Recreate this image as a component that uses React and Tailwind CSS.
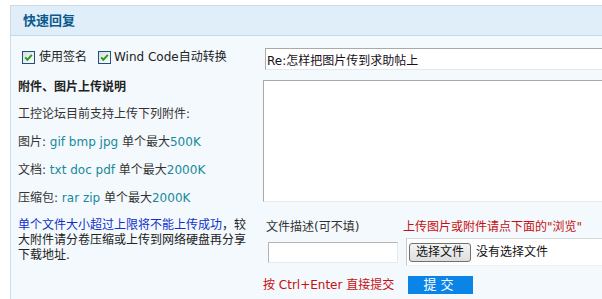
import React from "react";

const font = "font-['DejaVu_Sans','Noto_Sans_CJK_SC',sans-serif]";

function Check() {
  return (
    <span className="w-[13px] h-[13px] border border-[#1c5180] bg-gradient-to-br from-[#dcdcdc] to-white flex items-center justify-center shrink-0">
      <svg width="11" height="11" viewBox="0 0 11 11">
        <path d="M2.2 5.4 L4.4 7.8 L8.8 2.8" fill="none" stroke="#21a11f" strokeWidth="2" />
      </svg>
    </span>
  );
}

export default function App() {
  return (
    <div className={`w-[602px] h-[299px] overflow-hidden bg-white text-[12px] text-[#333] ${font}`}>
      <div className="ml-[10px] mt-[5px] w-[700px] h-[320px] border-l border-t border-[#c9dcea] bg-[#f3f9fd]">
        {/* Header */}
        <div className="h-[30px] bg-[#dfeef8] border-b border-[#c5dae8] flex items-center pl-[12px]">
          <span className="text-[13px] font-bold text-[#0b5a8e]">快速回复</span>
        </div>

        <div className="flex">
          {/* Left column */}
          <div className="w-[252px] pl-[7px] shrink-0">
            <div className="mt-[10px] h-[22px] flex items-center pl-[4px]">
              <Check />
              <span className="ml-[4px] text-[#222]">使用签名</span>
              <span className="ml-[11px]"><Check /></span>
              <span className="ml-[3px] text-[#222]">Wind Code自动转换</span>
            </div>
            <div className="mt-[6px] h-[26px] leading-[26px] font-bold text-[#222]">附件、图片上传说明</div>
            <div className="leading-[28px]">
              <div>工控论坛目前支持上传下列附件:</div>
              <div>
                图片: <span className="text-[#17899b]">gif bmp jpg</span> 单个最大<span className="text-[#17899b]">500K</span>
              </div>
              <div>
                文档: <span className="text-[#17899b]">txt doc pdf</span> 单个最大<span className="text-[#17899b]">2000K</span>
              </div>
              <div>
                压缩包: <span className="text-[#17899b]">rar zip</span> 单个最大<span className="text-[#17899b]">2000K</span>
              </div>
            </div>
            <div className="mt-[6px] leading-[15px] text-[#222]">
              <div>
                <span className="text-[#1030c8]">单个文件大小超过上限将不能上传成功</span><span>，较</span>
              </div>
              <div>大附件请分卷压缩或上传到网络硬盘再分享</div>
              <div>下载地址.</div>
            </div>
          </div>

          {/* Right column */}
          <div className="flex-1">
            <input
              defaultValue="Re:怎样把图片传到求助帖上"
              className="mt-[12px] ml-[2px] w-[400px] h-[22px] px-[1px] bg-white text-[12px] text-[#1a1020] border border-t-[#aaaaaa] border-l-[#aaaaaa] border-b-[#e2e8ee] border-r-[#e2e8ee] outline-none"
            />
            <textarea className="block mt-[10px] w-[400px] h-[122px] bg-white border border-t-[#a9a9a9] border-l-[#a9a9a9] border-b-[#e4eaf0] border-r-[#e4eaf0] resize-none outline-none" />

            <div className="mt-[15px] h-[20px] flex items-center">
              <span className="ml-[3px] w-[137px] text-[#333]">文件描述(可不填)</span>
              <span className="text-[#c80f0f]">上传图片或附件请点下面的"浏览"</span>
            </div>

            <div className="mt-[1px] flex items-center">
              <input className="ml-[5px] w-[130px] h-[21px] bg-white border border-t-[#b4b4b4] border-l-[#b4b4b4] border-b-[#e4eaf0] border-r-[#e4eaf0] outline-none" />
              <div className="ml-[8px] w-[300px] h-[28px] bg-white border border-t-[#d8d8d8] border-l-[#c8c8c8] border-b-[#eef2f6] flex items-center pl-[2px]">
                <span className="h-[19px] w-[62px] text-center rounded-[3px] border border-[#707070] bg-gradient-to-b from-[#f4f4f4] to-[#dedede] text-[12px] leading-[17px] text-[#111]">选择文件</span>
                <span className="ml-[5px] text-[12px] text-[#111]">没有选择文件</span>
              </div>
            </div>

            <div className="mt-[10px] h-[18px] flex items-center">
              <span className="w-[145px] text-[#c80f0f]">按 Ctrl+Enter 直接提交</span>
              <span className="w-[65px] h-[18px] bg-[#0b84e8] text-white text-[13px] leading-[18px] text-center tracking-[4px]">提交</span>
            </div>
          </div>
        </div>
      </div>
    </div>
  );
}
